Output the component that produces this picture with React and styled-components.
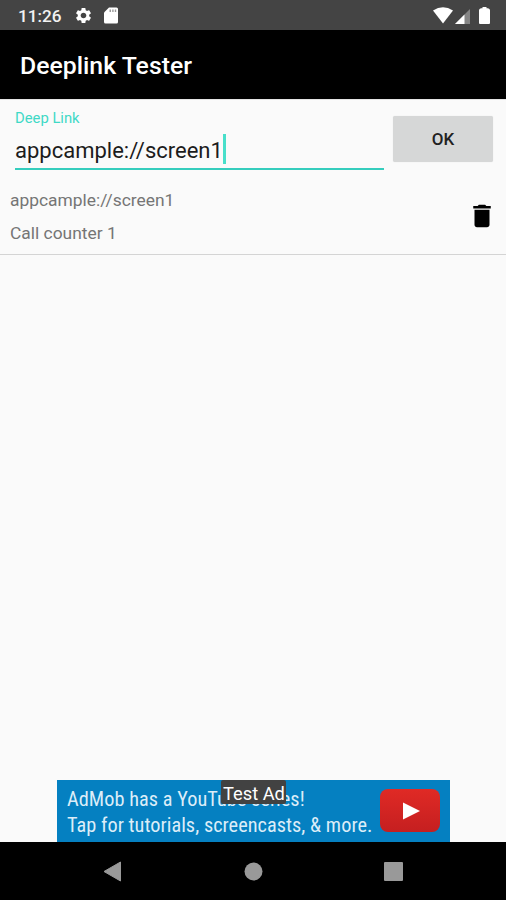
import React from "react";
import { useState } from "react";
import styled, { createGlobalStyle } from "styled-components";
import { MdSettings, MdDelete } from "react-icons/md";

function StatusBar() {
    return (
        <Status>
            <Clock>11:26</Clock>
            <MdSettings size={19} />
            <SdIcon width="14" height="17" viewBox="0 0 14 17">
                <path d="M5 0.5 H12.5 Q14 0.5 14 2 V15 Q14 16.5 12.5 16.5 H1.5 Q0 16.5 0 15 V5.5 Z" fill="#fff" />
                <path d="M5.5 2.5 H7 V5 H5.5 Z M8.2 2.5 H9.6 V5 H8.2 Z M10.8 2.5 H12.2 V5 H10.8 Z" fill="#999" />
            </SdIcon>
            <Signals>
                <svg width="20" height="17" viewBox="0 0 20 17">
                    <path d="M0 3.6 Q10 -3 20 3.6 L10 16.4 Z" fill="#fff" />
                </svg>
                <SignalIcon width="15" height="15" viewBox="0 0 15 15">
                    <path d="M15 0 V15 H0 Z" fill="#858585" />
                    <path d="M9.5 5.5 V15 H0 Z" fill="#fff" />
                </SignalIcon>
                <svg width="11" height="17" viewBox="0 0 11 17">
                    <path d="M3.5 0 H7.5 V1.3 H9 Q11 2 11 3.2 V16 Q11 17 10 17 H1 Q0 17 0 16 V3.2 Q0 2 2 1.3 H3.5 Z" fill="#fff" />
                </svg>
            </Signals>
        </Status>
    );
}

function AdBanner() {
    return (
        <AdRow>
            <Ad>
                <AdText>
                    <AdLine>AdMob has a YouTube series!</AdLine>
                    <AdLine>Tap for tutorials, screencasts, &amp; more.</AdLine>
                </AdText>
                <PlayBadge>
                    <svg width="17" height="18" viewBox="0 0 17 18">
                        <path d="M0 0.5 L17 9 L0 17.5 Z" fill="#fff" />
                    </svg>
                </PlayBadge>
                <TestLabel>Test Ad</TestLabel>
            </Ad>
        </AdRow>
    );
}

function NavigationBar() {
    return (
        <Nav>
            <svg width="19" height="21" viewBox="0 0 19 21">
                <path d="M17.5 1 V20 L1 10.5 Z" fill="#999" stroke="#999" strokeLinejoin="round" />
            </svg>
            <svg width="19" height="19" viewBox="0 0 19 19">
                <circle cx="9.5" cy="9.5" r="9" fill="#999" />
            </svg>
            <svg width="19" height="19" viewBox="0 0 19 19">
                <rect width="19" height="19" rx="1" fill="#999" />
            </svg>
        </Nav>
    );
}

function App() {
    const [links, setLinks] = useState([{ url: "appcample://screen1", count: 1 }]);

    const handleDelete = (url) => {
        setLinks(links.filter((item) => item.url !== url));
    };

    return (
        <Screen>
            <GlobalStyle />
            <StatusBar />
            <Toolbar>Deeplink Tester</Toolbar>
            <Form>
                <Field>
                    <Label>Deep Link</Label>
                    <Value>
                        <ValueText>appcample://screen1</ValueText>
                        <Cursor />
                    </Value>
                </Field>
                <OkButton>OK</OkButton>
            </Form>
            <List>
                {links.map((item) => (
                    <Row key={item.url}>
                        <div>
                            <RowText>{item.url}</RowText>
                            <RowText>Call counter {item.count}</RowText>
                        </div>
                        <DeleteButton aria-label="Delete" onClick={() => handleDelete(item.url)}>
                            <MdDelete size={30} />
                        </DeleteButton>
                    </Row>
                ))}
            </List>
            <AdBanner />
            <NavigationBar />
        </Screen>
    );
}

export default App;

const GlobalStyle = createGlobalStyle`
  * {
    box-sizing: border-box;
  }
  body {
    margin: 0;
    font-family: Roboto, sans-serif;
  }
  svg {
    display: block;
    flex-shrink: 0;
  }
`;

const Screen = styled.div`
  display: flex;
  flex-direction: column;
  width: 506px;
  height: 900px;
  overflow: hidden;
  background: #fafafa;
`;

const Status = styled.div`
  display: flex;
  align-items: center;
  height: 30px;
  padding: 1px 16px 0 18px;
  background: #444;
  color: #fff;
`;

const Clock = styled.span`
  width: 56px;
  font-size: 17.2px;
  font-weight: 500;
  color: #f2f2f2;
`;

const SdIcon = styled.svg`
  margin-left: 11px;
`;

const Signals = styled.div`
  display: flex;
  align-items: center;
  margin-left: auto;
`;

const SignalIcon = styled.svg`
  margin: 1px 9px 0 2px;
`;

const Toolbar = styled.header`
  display: flex;
  align-items: center;
  height: 69px;
  padding: 2px 20px 0;
  background: #000;
  color: #fff;
  font-size: 24.8px;
  font-weight: 500;
`;

const Form = styled.div`
  display: flex;
  height: 78px;
  padding: 0 13px 0 15px;
  border-top: 1px solid #e4e4e4;
`;

const Field = styled.div`
  width: 369px;
  height: 70px;
  padding-top: 9px;
  border-bottom: 2px solid #35cdbd;
`;

const Label = styled.div`
  line-height: 18px;
  font-size: 14.8px;
  color: #3fd9c6;
`;

const Value = styled.div`
  display: flex;
  align-items: center;
  height: 30px;
  margin-top: 7px;
  font-size: 22px;
  color: #1c1c1c;
`;

const ValueText = styled.span`
  padding-top: 2px;
`;

const Cursor = styled.span`
  width: 3px;
  height: 30px;
  background: #48dfca;
`;

const OkButton = styled.button`
  width: 100px;
  height: 46px;
  margin: 16px 0 0 9px;
  padding: 0;
  border: 0;
  border-radius: 2px;
  background: #d6d7d7;
  box-shadow: 0 0 1px rgba(0, 0, 0, 0.15);
  color: #212121;
  font-family: inherit;
  font-size: 17px;
  font-weight: 500;
`;

const List = styled.div`
  flex: 1;
`;

const Row = styled.div`
  display: flex;
  align-items: center;
  justify-content: space-between;
  height: 78px;
  padding: 0 9px 0 10px;
  border-bottom: 1px solid #d4d4d4;
`;

const RowText = styled.div`
  height: 33px;
  line-height: 35px;
  font-size: 17.4px;
  color: #757575;
`;

const DeleteButton = styled.button`
  padding: 0;
  border: 0;
  background: none;
  color: #000;
`;

const AdRow = styled.div`
  display: flex;
  padding-left: 57px;
`;

const Ad = styled.div`
  position: relative;
  display: flex;
  width: 393px;
  height: 62px;
  padding: 6px 10px;
  background: #0580c1;
`;

const AdText = styled.div`
  width: 313px;
`;

const AdLine = styled.div`
  width: max-content;
  line-height: 26px;
  font-family: "Roboto Condensed", Roboto, sans-serif;
  font-stretch: 75%;
  font-size: 20.3px;
  letter-spacing: 0.04px;
  color: #dcedf8;
`;

const PlayBadge = styled.div`
  display: flex;
  align-items: center;
  justify-content: center;
  width: 60px;
  height: 43px;
  margin-top: 3px;
  padding-left: 3px;
  border-radius: 8px;
  background: linear-gradient(#e02a25, #c51f20);
`;

const TestLabel = styled.div`
  position: absolute;
  top: 0;
  left: 164px;
  width: 65px;
  height: 24px;
  padding-left: 2px;
  line-height: 27px;
  border-radius: 2px;
  background: #424242;
  color: #fff;
  font-size: 18.3px;
  white-space: nowrap;
`;

const Nav = styled.nav`
  display: flex;
  align-items: center;
  justify-content: space-between;
  height: 58px;
  padding: 0 103px;
  background: #000;
`;
